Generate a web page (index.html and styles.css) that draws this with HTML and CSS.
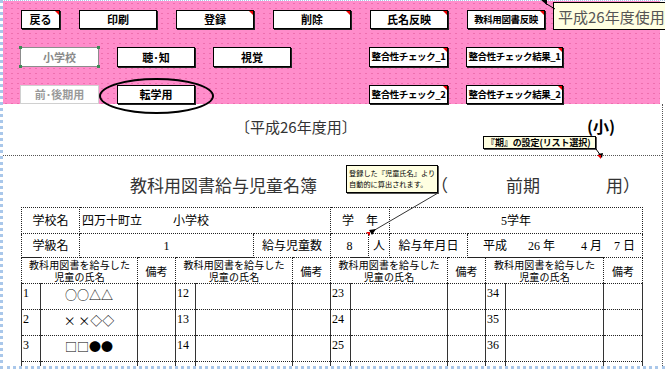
FILE: index.html
```html
<!DOCTYPE html>
<html lang="ja">

<head>
    <meta charset="UTF-8">
    <title>教科用図書給与児童名簿</title>
    <link rel="stylesheet" href="styles.css">
</head>

<body>
    <div class="screen">
        <!-- Pink control panel with the macro buttons -->
        <div class="toolbar">
            <div class="btn-row row-top">
                <button class="btn note w-back">戻る</button>
                <button class="btn">印刷</button>
                <button class="btn note">登録</button>
                <button class="btn note">削除</button>
                <button class="btn note">氏名反映</button>
                <button class="btn note small">教科用図書反映</button>
            </div>
            <div class="btn-row row-mid">
                <button class="btn w-opt selected">小学校</button>
                <button class="btn">聴･知</button>
                <button class="btn">視覚</button>
                <button class="btn note small w-check push-a">整合性チェック_1</button>
                <button class="btn note small w-result">整合性チェック結果_1</button>
            </div>
            <div class="btn-row row-low">
                <button class="btn w-opt faded">前･後期用</button>
                <button class="btn">転学用</button>
                <button class="btn note small w-check push-b">整合性チェック_2</button>
                <button class="btn note small w-result">整合性チェック結果_2</button>
            </div>
        </div>

        <!-- Worksheet -->
        <div class="sheet">
            <div class="year-row">
                <span class="year-label">〔平成26年度用〕</span>
                <span class="grade">(小)</span>
            </div>
            <div class="title-row">
                <span class="title">教科用図書給与児童名簿</span>
                <span class="term-open">（</span>
                <span class="term">前期</span>
                <span class="term-close">用）</span>
            </div>

            <table class="info">
                <colgroup>
                    <col style="width:58px">
                    <col style="width:174px">
                    <col style="width:77px">
                    <col style="width:38px">
                    <col style="width:21px">
                    <col style="width:78px">
                    <col style="width:175px">
                </colgroup>
                <tr class="r1">
                    <td>学校名</td>
                    <td colspan="2" class="left">四万十町立<span class="school">小学校</span></td>
                    <td colspan="2">学　年</td>
                    <td colspan="2">5学年</td>
                </tr>
                <tr class="r2">
                    <td>学級名</td>
                    <td>1</td>
                    <td>給与児童数</td>
                    <td>8</td>
                    <td>人</td>
                    <td>給与年月日</td>
                    <td class="date">平成<span class="sp-a"></span>26&nbsp;年<span class="sp-b"></span>4&nbsp;月<span class="sp-c"></span>7&nbsp;日</td>
                </tr>
            </table>

            <table class="list">
                <colgroup>
                    <col style="width:19px"><col style="width:97px"><col style="width:38px">
                    <col style="width:20px"><col style="width:97px"><col style="width:38px">
                    <col style="width:20px"><col style="width:97px"><col style="width:38px">
                    <col style="width:20px"><col style="width:98px"><col style="width:39px">
                </colgroup>
                <tr class="head">
                    <th colspan="2"><span class="hl">教科用図書を給与した</span><span class="hl">児童の氏名</span></th>
                    <th>備考</th>
                    <th colspan="2"><span class="hl">教科用図書を給与した</span><span class="hl">児童の氏名</span></th>
                    <th>備考</th>
                    <th colspan="2"><span class="hl">教科用図書を給与した</span><span class="hl">児童の氏名</span></th>
                    <th>備考</th>
                    <th colspan="2"><span class="hl">教科用図書を給与した</span><span class="hl">児童の氏名</span></th>
                    <th>備考</th>
                </tr>
                <tr>
                    <td class="no">1</td><td class="name">○○△△</td><td></td>
                    <td class="no">12</td><td class="name"></td><td></td>
                    <td class="no">23</td><td class="name"></td><td></td>
                    <td class="no">34</td><td class="name"></td><td></td>
                </tr>
                <tr>
                    <td class="no">2</td><td class="name">× ×◇◇</td><td></td>
                    <td class="no">13</td><td class="name"></td><td></td>
                    <td class="no">24</td><td class="name"></td><td></td>
                    <td class="no">35</td><td class="name"></td><td></td>
                </tr>
                <tr>
                    <td class="no">3</td><td class="name">□□●●</td><td></td>
                    <td class="no">14</td><td class="name"></td><td></td>
                    <td class="no">25</td><td class="name"></td><td></td>
                    <td class="no">36</td><td class="name"></td><td></td>
                </tr>
                <tr>
                    <td class="no"></td><td class="name"></td><td></td>
                    <td class="no"></td><td class="name"></td><td></td>
                    <td class="no"></td><td class="name"></td><td></td>
                    <td class="no"></td><td class="name"></td><td></td>
                </tr>
            </table>
        </div>
    </div>

    <!-- Overlays: comments, highlight ring and connector lines -->
    <div class="tip">平成26年度使用</div>
    <div class="comment c-term">『期』の設定(リスト選択)</div>
    <div class="comment c-count">登録した『児童氏名』より<br>自動的に算出されます。</div>
    <div class="ring"></div>
    <svg class="links" width="665" height="369" viewBox="0 0 665 369">
        <line x1="545" y1="3" x2="555" y2="9" stroke="#000" stroke-width="1" />
        <polygon points="541,0 547,0 547,5" fill="#000" />
        <line x1="596" y1="149" x2="601" y2="156" stroke="#000" stroke-width="1" />
        <polygon points="598,154 603,153 602,158" fill="#000" />
        <polygon points="597,155 601,155 601,159" fill="#e00" />
        <line x1="438" y1="193" x2="373" y2="231" stroke="#333" stroke-width="1" />
        <polygon points="369,230 376,229 372,235" fill="#000" />
        <polygon points="366,232 370,232 370,236" fill="#e00" />
    </svg>
</body>

</html>
```

FILE: styles.css
```css
/* Reset */
* {
    margin: 0;
    padding: 0;
    box-sizing: border-box;
}

body {
    position: relative;
    width: 665px;
    height: 369px;
    overflow: hidden;
    background: #fff;
    font-family: "Noto Sans CJK JP", sans-serif;
    color: #000;
}

/* Dotted selection frame of the capture */
.screen {
    width: 665px;
    height: 369px;
    border-left: 3px dotted #a9c7ea;
    border-top: 1px dotted #a9c7ea;
    border-bottom: 3px dotted #a9c7ea;
}

/* Pink button panel */
.toolbar {
    width: 657px;
    height: 103px;
    padding-top: 9px;
    display: flex;
    flex-direction: column;
    gap: 18px;
    background-color: #ff8dcb;
    background-image: radial-gradient(circle, #ee6fae 0.6px, transparent 1px);
    background-size: 6px 5px;
}

.btn-row {
    display: flex;
    align-items: flex-start;
}

.row-top {
    height: 19px;
    padding-left: 18px;
    gap: 19px;
}

.row-mid {
    height: 20px;
    padding-left: 17px;
    gap: 18px;
}

.row-low {
    height: 19px;
    padding-left: 17px;
    gap: 18px;
}

.btn {
    position: relative;
    width: 78px;
    height: 100%;
    background: #fff;
    border: 1px solid #000;
    box-shadow: 1px 1px 0 #222;
    font-family: "Noto Sans CJK JP", sans-serif;
    font-size: 11px;
    font-weight: bold;
    line-height: 1;
    color: #000;
    padding: 0;
}

.btn.small {
    font-size: 9.5px;
    letter-spacing: -0.4px;
}

/* comment marker in the corner */
.btn.note::after {
    content: "";
    position: absolute;
    top: 0;
    right: 0;
    border-top: 4px solid #e00;
    border-left: 4px solid transparent;
}

.w-back {
    width: 39px;
}

.w-opt {
    width: 79px;
}

.w-check {
    width: 79px;
}

.w-result {
    width: 97px;
}

.push-a {
    margin-left: 60px;
}

.push-b {
    margin-left: 156px;
}

.selected {
    border-color: #8c8c8c;
    box-shadow: none;
    color: #8a8a8a;
}

.selected::before {
    content: "";
    position: absolute;
    top: -2px;
    left: -2px;
    right: -2px;
    bottom: -2px;
    background:
        linear-gradient(#3d8a55, #3d8a55) left top / 3px 3px no-repeat,
        linear-gradient(#3d8a55, #3d8a55) right top / 3px 3px no-repeat,
        linear-gradient(#3d8a55, #3d8a55) left bottom / 3px 3px no-repeat,
        linear-gradient(#3d8a55, #3d8a55) right bottom / 3px 3px no-repeat;
}

.faded {
    border-color: #d0d0d0;
    box-shadow: none;
    color: #9a9a9a;
}

/* Worksheet area */
.sheet {
    width: 660px;
    height: 262px;
    border-right: 1px dotted #555;
    overflow: hidden;
}

.year-row {
    height: 52px;
    padding-top: 14px;
    display: flex;
    align-items: baseline;
    border-bottom: 1px dotted #555;
}

.year-label {
    margin-left: 232px;
    width: 352px;
    font-size: 15px;
    line-height: 1;
    color: #333;
}

.grade {
    font-size: 16px;
    font-weight: bold;
    line-height: 1;
}

.title-row {
    height: 51px;
    padding-top: 20px;
    display: flex;
    align-items: baseline;
    font-size: 17px;
    line-height: 1;
    color: #333;
}

.title {
    margin-left: 127px;
}

.term-open {
    margin-left: 114px;
}

.term {
    margin-left: 58px;
}

.term-close {
    margin-left: 66px;
}

/* Tables */
.info,
.list {
    margin-left: 18px;
    width: 621px;
    border-collapse: collapse;
    table-layout: fixed;
    font-family: "Liberation Serif", "Noto Sans CJK JP", serif;
    font-size: 12px;
}

.info td {
    border: 1px dotted #222;
    text-align: center;
    vertical-align: middle;
    line-height: 1;
}

.info .r1 td {
    height: 26px;
}

.info .r2 td {
    height: 24px;
}

.info .left {
    text-align: left;
    padding-left: 2px;
}

.school {
    margin-left: 31px;
}

.info .date {
    text-align: left;
    padding-left: 15px;
}

.sp-a,
.sp-b,
.sp-c {
    display: inline-block;
}

.sp-a {
    width: 21px;
}

.sp-b {
    width: 26px;
}

.sp-c {
    width: 12px;
}

.list {
    margin-top: -1px;
}

.list th {
    height: 26px;
    border: 1px dotted #222;
    font-family: "Noto Sans CJK JP", sans-serif;
    font-weight: normal;
    font-size: 11px;
    line-height: 12px;
}

.list th[colspan] {
    font-size: 10px;
    letter-spacing: 0.1px;
}

.hl {
    display: block;
    height: 12px;
    line-height: 12px;
    overflow: visible;
}

.list td {
    height: 26px;
    border-top: 1px dotted #222;
    border-bottom: 1px dotted #222;
    border-left: 1px solid #333;
    border-right: 1px solid #333;
}

.list .no {
    vertical-align: top;
    padding: 3px 0 0 1px;
    line-height: 1;
}

.list .name {
    text-align: center;
    vertical-align: middle;
    font-family: "Noto Sans CJK JP", sans-serif;
    font-size: 12px;
    line-height: 1;
    padding-bottom: 3px;
}

/* Overlays */
.tip {
    position: absolute;
    left: 553px;
    top: 2px;
    width: 120px;
    height: 28px;
    padding: 6px 0 0 4px;
    background: #ffffe1;
    border: 1px solid #000;
    font-size: 15px;
    line-height: 1;
    color: #555;
    white-space: nowrap;
}

.comment {
    position: absolute;
    background: #ffffe1;
    border: 1px solid #000;
    box-shadow: 1px 1px 0 #555;
    white-space: nowrap;
    line-height: 1;
}

.c-term {
    left: 483px;
    top: 136px;
    width: 113px;
    height: 13px;
    padding: 1px 0 0 2px;
    font-size: 9px;
    font-weight: bold;
    letter-spacing: -0.1px;
}

.c-count {
    left: 346px;
    top: 165px;
    width: 92px;
    height: 28px;
    padding: 2px 0 0 2px;
    font-size: 7.2px;
    line-height: 11px;
}

.ring {
    position: absolute;
    left: 99px;
    top: 78px;
    width: 115px;
    height: 36px;
    border: 2px solid #000;
    border-radius: 50%;
}

.links {
    position: absolute;
    left: 0;
    top: 0;
    pointer-events: none;
}
```
